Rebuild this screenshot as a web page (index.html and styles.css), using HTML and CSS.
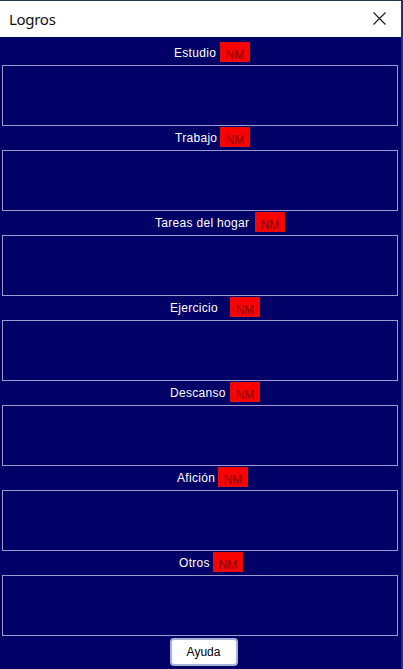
FILE: index.html
```html
<!DOCTYPE html>
<html lang="es">
<head>
<meta charset="utf-8">
<title>Logros</title>
<link rel="stylesheet" href="styles.css">
</head>
<body>
<div class="window">
  <div class="titlebar">
    <span class="title">Logros</span>
    <svg class="close" width="13" height="13" viewBox="0 0 13 13"><path d="M0.5 0.5 L12.5 12.5 M12.5 0.5 L0.5 12.5" stroke="#1a1a1a" stroke-width="1.1" fill="none"/></svg>
  </div>
  <div class="content">
    <div class="header first h-estudio"><span class="label">Estudio</span><span class="badge">NM</span></div>
    <div class="box"></div>
    <div class="header h-trabajo"><span class="label">Trabajo</span><span class="badge">NM</span></div>
    <div class="box"></div>
    <div class="header h-tareas"><span class="label">Tareas del hogar</span><span class="badge">NM</span></div>
    <div class="box"></div>
    <div class="header h-ejercicio"><span class="label">Ejercicio</span><span class="badge">NM</span></div>
    <div class="box"></div>
    <div class="header h-descanso"><span class="label">Descanso</span><span class="badge">NM</span></div>
    <div class="box"></div>
    <div class="header h-aficion"><span class="label">Afición</span><span class="badge">NM</span></div>
    <div class="box"></div>
    <div class="header h-otros"><span class="label">Otros</span><span class="badge">NM</span></div>
    <div class="box"></div>
    <div class="footer"><button class="btn">Ayuda</button></div>
  </div>
</div>
</body>
</html>
```

FILE: styles.css
```css
html, body {
  margin: 0;
  padding: 0;
  height: 669px;
  overflow: hidden;
}
body {
  background: #3c2a5c;
  width: 403px;
}
.window {
  width: 401px;
  height: 669px;
  box-sizing: border-box;
  border-top: 1px solid #22384a;
  background: #000066;
  display: flex;
  flex-direction: column;
}
.titlebar {
  height: 36px;
  background: #ffffff;
  display: flex;
  align-items: center;
  justify-content: space-between;
  padding: 0 15px 0 9px;
  flex: none;
}
.title {
  font-family: "Segoe UI", "Noto Sans", sans-serif;
  font-size: 15px;
  color: #111;
  letter-spacing: -0.3px;
  margin-top: -1px;
}
.close {
  display: block;
  margin-top: -1px;
}
.content {
  display: flex;
  flex-direction: column;
  padding: 0 2px 0 2px;
  font-family: "Liberation Sans", Arial, sans-serif;
  font-size: 12px;
}
.header {
  height: 24px;
  box-sizing: border-box;
  display: flex;
  align-items: center;
  padding-bottom: 2px;
}
.header.first {
  height: 28px;
  padding-top: 4px;
}
.label {
  color: #ffffff;
  white-space: nowrap;
  letter-spacing: 0.3px;
  flex: none;
  padding-top: 1px;
}
.badge {
  width: 30px;
  height: 20px;
  box-sizing: border-box;
  background: #ff0000;
  border: 1px solid #e01010;
  color: #7a0000;
  line-height: 14px;
  padding-top: 5px;
  text-align: center;
  flex: none;
}
.h-estudio { padding-left: 172px; }
.h-estudio .label { width: 46px; }
.h-trabajo { padding-left: 173px; }
.h-trabajo .label { width: 45px; }
.h-tareas { padding-left: 153px; }
.h-tareas .label { width: 100px; }
.h-ejercicio { padding-left: 168px; }
.h-ejercicio .label { width: 60px; }
.h-descanso { padding-left: 168px; }
.h-descanso .label { width: 60px; }
.h-aficion { padding-left: 175px; }
.h-aficion .label { width: 41px; }
.h-otros { padding-left: 177px; }
.h-otros .label { width: 34px; }
.box {
  height: 61px;
  box-sizing: border-box;
  border: 1px solid #9a9ad0;
  width: 396px;
}
.footer {
  display: flex;
  justify-content: center;
  padding-top: 2px;
}
.btn {
  width: 68px;
  height: 28px;
  box-sizing: border-box;
  background: #ffffff;
  border: 2px solid #a4b4d4;
  border-radius: 4px;
  font-family: "Liberation Sans", Arial, sans-serif;
  font-size: 12px;
  color: #000;
  padding: 0;
  margin-left: 6px;
}
```
